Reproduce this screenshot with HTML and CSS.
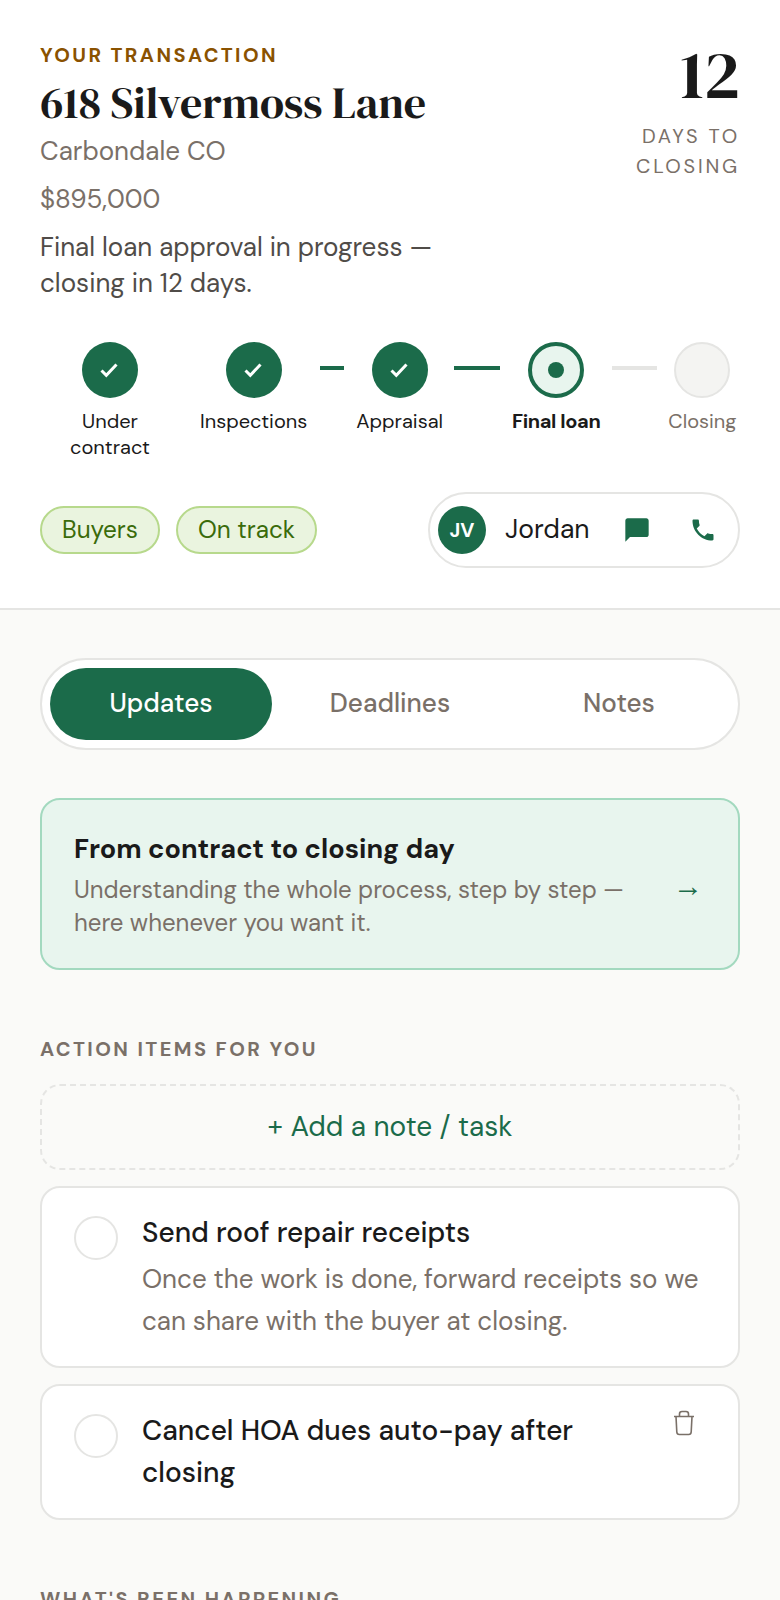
FILE: index.html
```html
<!DOCTYPE html>
<html lang="en">
<head>
	<meta charset="UTF-8">
	<title>Your transaction</title>
	<link rel="stylesheet" href="styles.css">
</head>
<body>
	<header class="top">
		<div class="head">
			<div class="info">
				<div class="eyebrow">YOUR TRANSACTION</div>
				<h1>618 Silvermoss Lane</h1>
				<div class="city">Carbondale CO</div>
				<div class="price">$895,000</div>
				<p class="status">Final loan approval in progress — closing in 12 days.</p>
			</div>
			<div class="count">
				<div class="num">12</div>
				<div class="lbl">DAYS TO CLOSING</div>
			</div>
		</div>
		<div class="steps">
			<div class="step wrap">
				<span class="dot done"><svg viewBox="0 0 24 24"><path d="M3.500 12.500l4.800 4.800L18.500 6.500"/></svg></span>
				<div class="name">Under contract</div>
			</div>
			<i class="gap first"></i>
			<div class="step">
				<span class="dot done"><svg viewBox="0 0 24 24"><path d="M3.500 12.500l4.800 4.800L18.500 6.500"/></svg></span>
				<div class="name">Inspections</div>
			</div>
			<i class="gap second"><b class="line"></b></i>
			<div class="step">
				<span class="dot done"><svg viewBox="0 0 24 24"><path d="M3.500 12.500l4.800 4.800L18.500 6.500"/></svg></span>
				<div class="name">Appraisal</div>
			</div>
			<i class="gap third"><b class="line"></b></i>
			<div class="step">
				<span class="dot now"><b></b></span>
				<div class="name bold">Final loan</div>
			</div>
			<i class="gap fourth"><b class="line off"></b></i>
			<div class="step">
				<span class="dot todo"></span>
				<div class="name dim">Closing</div>
			</div>
		</div>
		<div class="foot">
			<div class="pills">
				<span class="pill">Buyers</span>
				<span class="pill">On track</span>
			</div>
			<div class="agent">
				<span class="avatar">JV</span>
				<span class="agent-name">Jordan</span>
				<svg class="ico" viewBox="0 0 24 24"><path d="M20 2H4c-1.100 0-2 .9-2 2v18l4-4h14c1.100 0 2-.9 2-2V4c0-1.100-.9-2-2-2z"/></svg>
				<svg class="ico" viewBox="0 0 24 24"><path d="M6.620 10.790c1.440 2.830 3.760 5.140 6.590 6.590l2.200-2.200c.27-.27.67-.36 1.020-.24 1.120.37 2.330.57 3.570.57.550 0 1 .45 1 1V20c0 .55-.45 1-1 1-9.390 0-17-7.610-17-17 0-.55.45-1 1-1h3.500c.55 0 1 .45 1 1 0 1.250.2 2.450.57 3.570.11.350.03.740-.25 1.020l-2.200 2.200z"/></svg>
			</div>
		</div>
	</header>
	<main class="body">
		<nav class="tabs">
			<span class="tab on">Updates</span>
			<span class="tab">Deadlines</span>
			<span class="tab">Notes</span>
		</nav>
		<div class="guide">
			<div class="guide-main">
				<div class="guide-title">From contract to closing day</div>
				<div class="guide-text">Understanding the whole process, step by step — here whenever you want it.</div>
			</div>
			<span class="arrow">→</span>
		</div>
		<h2 class="section">ACTION ITEMS FOR YOU</h2>
		<div class="add">+ Add a note / task</div>
		<div class="card">
			<span class="check"></span>
			<div class="card-main">
				<div class="card-title">Send roof repair receipts</div>
				<div class="card-text">Once the work is done, forward receipts so we can share with the buyer at closing.</div>
			</div>
		</div>
		<div class="card">
			<span class="check"></span>
			<div class="card-main">
				<div class="card-title">Cancel HOA dues auto-pay after closing</div>
			</div>
			<svg class="trash" viewBox="0 0 22 26"><path d="M1 6.500h20M6.500 6.500V4q0-2.500 2.500-2.500h4q2.500 0 2.500 2.500v2.500M3 6.500l.8 15.500q.2 2.500 2.500 2.500h9.400q2.300 0 2.500-2.500l.8-15.500"/></svg>
		</div>
		<h2 class="section">WHAT'S BEEN HAPPENING</h2>
	</main>
</body>
</html>
```

FILE: styles.css
```css
*{
	box-sizing:border-box;
}
html,body{
	margin:0;
	height:1600px;
	overflow:hidden;
}
body{
	font-family:"DM Sans","Noto Sans",sans-serif;
	background:#fafaf8;
	color:#1a1a1a;
}
.top{
	background:#fff;
	border-bottom:2px solid #e5e5e3;
	padding:40px 40px 0;
	height:610px;
}
.head{
	display:flex;
	justify-content:space-between;
}
.info{
	width:420px;
}
.eyebrow{
	font-size:20px;
	line-height:30px;
	font-weight:700;
	letter-spacing:2.400px;
	color:#8a5200;
}
h1{
	font-family:"DM Serif Display","Playfair Display","Liberation Serif",serif;
	font-size:44px;
	line-height:56px;
	font-weight:400;
	margin:5px 0 3px;
	white-space:nowrap;
}
.city,.price{
	font-size:26px;
	line-height:34px;
	color:#7a7068;
}
.price{
	margin-top:14px;
}
.status{
	font-size:26px;
	line-height:36px;
	color:#504c48;
	margin:13px 0 0;
}
.count{
	text-align:right;
	width:130px;
}
.num{
	font-family:"DM Serif Display","Playfair Display","Liberation Serif",serif;
	font-weight:400;
	font-size:68px;
	line-height:64px;
	margin-top:3px;
}
.lbl{
	font-size:20px;
	line-height:30px;
	letter-spacing:2.800px;
	color:#7a7068;
	margin-top:14px;
}
.steps{
	display:flex;
	margin-top:41px;
	padding-left:20px;
}
.step{
	flex:none;
	display:flex;
	flex-direction:column;
	align-items:center;
	text-align:center;
}
.wrap{
	width:100px;
}
.gap{
	flex:none;
	display:block;
	padding-top:24px;
}
.gap.first{
	width:40px;
}
.gap.second{
	width:49px;
	padding-left:13px;
	padding-right:12px;
}
.gap.third{
	width:69px;
	padding-left:11px;
	padding-right:12px;
}
.gap.fourth{
	width:68px;
	padding-left:12px;
	padding-right:11px;
}
.line{
	display:block;
	height:4px;
	background:#1b6b4a;
}
.line.off{
	background:#e5e5e3;
}
.dot{
	width:56px;
	height:56px;
	border-radius:50%;
	display:flex;
	align-items:center;
	justify-content:center;
}
.dot svg{
	width:24px;
	height:24px;
	fill:none;
	stroke:#fff;
	stroke-width:3;
}
.done{
	background:#1b6b4a;
}
.now{
	background:#e8f5ee;
	border:4px solid #1b6b4a;
}
.now b{
	width:16px;
	height:16px;
	border-radius:50%;
	background:#1b6b4a;
}
.todo{
	background:#f4f4f2;
	border:2px solid #e5e5e3;
}
.name{
	font-size:20px;
	line-height:26px;
	margin-top:10px;
}
.bold{
	font-weight:700;
	letter-spacing:-0.400px;
}
.dim{
	color:#7a7068;
}
.foot{
	display:flex;
	justify-content:space-between;
	align-items:center;
	margin-top:32px;
}
.pills{
	display:flex;
	gap:16px;
}
.pill{
	height:48px;
	line-height:44px;
	padding:0 20px;
	font-size:24.300px;
	color:#3a6b0a;
	background:#eaf4df;
	border:2px solid #b7d98c;
	border-radius:24px;
}
.agent{
	display:flex;
	align-items:center;
	height:76px;
	width:312px;
	padding:0 21px 0 8px;
	border:2px solid #e5e5e3;
	border-radius:38px;
}
.avatar{
	width:48px;
	height:48px;
	border-radius:50%;
	background:#1b6b4a;
	color:#fff;
	font-size:20px;
	font-weight:700;
	text-align:center;
	line-height:48px;
}
.agent-name{
	font-size:26.500px;
	line-height:32px;
	margin:-2px 0 0 19px;
	flex:1;
}
.ico{
	width:28px;
	height:28px;
	fill:#1b6b4a;
}
.ico + .ico{
	margin-left:38px;
}
.body{
	padding:48px 40px 0;
}
.tabs{
	display:flex;
	gap:7px;
	height:92px;
	padding:8px;
	background:#fff;
	border:2px solid #e5e5e3;
	border-radius:46px;
}
.tab{
	flex:1;
	text-align:center;
	font-size:26px;
	line-height:71px;
	font-weight:500;
	color:#7a7068;
	border-radius:36px;
}
.tab.on{
	background:#1b6b4a;
	color:#fff;
}
.guide{
	display:flex;
	align-items:center;
	justify-content:space-between;
	margin-top:48px;
	height:172px;
	padding:0 35px 0 32px;
	background:#e8f5ee;
	border:2px solid #a3d9bf;
	border-radius:20px;
}
.guide-main{
	padding-top:3px;
}
.guide-title{
	font-size:27px;
	line-height:36px;
	font-weight:700;
	margin-bottom:7px;
}
.guide-text{
	font-size:24px;
	line-height:32.600px;
	color:#7a7068;
	width:560px;
}
.arrow{
	font-family:"Liberation Sans",sans-serif;
	font-size:30px;
	margin-top:3px;
	color:#1b6b4a;
}
.section{
	font-size:20px;
	line-height:26px;
	font-weight:700;
	letter-spacing:2.440px;
	color:#7a7068;
	margin:66px 0 22px;
}
.add{
	height:86px;
	line-height:82px;
	text-align:center;
	font-size:28px;
	color:#1b6b4a;
	border:2px dashed #e5e5e3;
	border-radius:20px;
	margin-bottom:16px;
}
.card{
	display:flex;
	gap:24px;
	padding:24px 32px;
	background:#fff;
	border:2px solid #e5e5e3;
	border-radius:20px;
	margin-bottom:16px;
}
.check{
	flex:none;
	width:44px;
	height:44px;
	margin-top:4px;
	border-radius:50%;
	border:2px solid #e5e5e3;
}
.card-main{
	flex:1;
}
.card-title{
	font-size:28px;
	line-height:42px;
	font-weight:500;
}
.card-text{
	font-size:26px;
	line-height:41.600px;
	color:#7a7068;
	margin-top:5px;
}
.trash{
	flex:none;
	width:22px;
	height:26px;
	margin-right:11px;
	margin-left:9px;
	fill:none;
	stroke:#7a7068;
	stroke-width:1.600;
}
```
